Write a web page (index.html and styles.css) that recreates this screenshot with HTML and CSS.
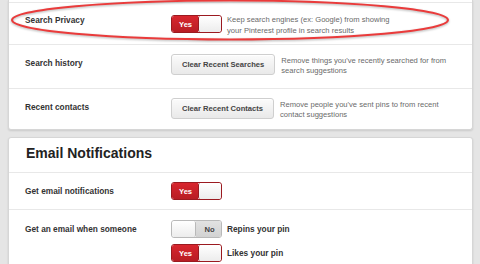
FILE: index.html
```html
<!doctype html>
<html lang="en">
  <head>
    <meta charset="utf-8">
    <meta name="viewport" content="width=device-width,initial-scale=1">
    <title>Account Settings</title>
    <link rel="stylesheet" href="styles.css">
  </head>

  <body>
    <main class="settings">
      <section class="card">
        <div class="row">
          <div class="label">Search Privacy</div>
          <div class="toggle on"><span class="face">Yes</span><span class="knob"></span></div>
          <p class="desc">Keep search engines (ex: Google) from showing<br>your Pinterest profile in search results</p>
        </div>

        <div class="row action">
          <div class="label">Search history</div>
          <button class="btn">Clear Recent Searches</button>
          <p class="desc">Remove things you've recently searched for from<br>search suggestions</p>
        </div>

        <div class="row action last">
          <div class="label">Recent contacts</div>
          <button class="btn">Clear Recent Contacts</button>
          <p class="desc">Remove people you've sent pins to from recent<br>contact suggestions</p>
        </div>
      </section>

      <section class="card">
        <h2>Email Notifications</h2>

        <div class="row single">
          <div class="label">Get email notifications</div>
          <div class="toggle on"><span class="face">Yes</span><span class="knob"></span></div>
        </div>

        <div class="row single multi">
          <div class="label">Get an email when someone</div>
          <ul class="options">
            <li>
              <div class="toggle off"><span class="knob"></span><span class="face">No</span></div>
              <span>Repins your pin</span>
            </li>
            <li>
              <div class="toggle on"><span class="face">Yes</span><span class="knob"></span></div>
              <span>Likes your pin</span>
            </li>
          </ul>
        </div>
      </section>

      <!-- hand-drawn highlight round the privacy row -->
      <svg class="mark" width="480" height="48" viewBox="0 0 480 48">
        <ellipse cx="230" cy="20" rx="218" ry="19.5" fill="none" stroke="#ea3b3b" stroke-width="2"></ellipse>
      </svg>
    </main>
  </body>
</html>
```

FILE: styles.css
```css
body {
  margin: 0;
  background: #e5e5e5;
  color: #333;
  font-family: "Liberation Sans", Arial, sans-serif;
  -webkit-font-smoothing: antialiased;
}

.settings {
  position: relative;
  padding: 0 7px 0 8px;
}

.card {
  background: #fff;
  border: 1px solid #d6d6d6;
  border-top: 0;
  border-radius: 0 0 3px 3px;
  box-shadow: 0 1px 2px rgba(0, 0, 0, 0.12);
  padding-top: 2px;
  margin-bottom: 7px;
}

.card + .card {
  border-top: 1px solid #d6d6d6;
  border-radius: 3px;
  padding-top: 0;
}

.card h2 {
  margin: 0;
  padding: 7px 0 11px 17px;
  font-size: 14px;
  line-height: 16px;
  color: #222;
}

.row {
  display: flex;
  align-items: flex-start;
  border-top: 1px solid #e8e8e8;
  padding: 12px 0 8px 16px;
}

.label {
  width: 146px;
  flex: none;
  font-size: 8.3px;
  font-weight: bold;
  line-height: 10px;
  color: #333;
}

.desc {
  margin: 0 0 0 5px;
  font-size: 7.6px;
  line-height: 10.5px;
  color: #6a6a6a;
}

.row.action {
  padding: 9px 0 12px 16px;
}

.row.action.last {
  padding-bottom: 9px;
}

.action .label {
  margin-top: 4px;
}

.action .desc {
  margin: 2px 0 0 6px;
  line-height: 10px;
}

.row.single {
  padding: 9px 0 9px 16px;
}

.single .label {
  margin-top: 4px;
}

.row.multi {
  padding: 10px 0 6px 16px;
}

.btn {
  height: 21px;
  padding: 0 10px;
  border: 1px solid #cfcfcf;
  border-radius: 3px;
  background: linear-gradient(#fbfbfb, #e9e9e9);
  box-shadow: inset 0 1px 0 #fff;
  font-family: inherit;
  font-size: 7.6px;
  font-weight: bold;
  color: #444;
  flex: none;
}

.toggle {
  display: flex;
  width: 51px;
  height: 18px;
  box-sizing: border-box;
  border: 1px solid #9b1a20;
  border-radius: 3px;
  overflow: hidden;
  flex: none;
}

.toggle .face {
  display: flex;
  align-items: center;
  font-size: 7.6px;
  font-weight: bold;
}

.toggle.on .face {
  width: 26px;
  padding-left: 7px;
  box-sizing: border-box;
  background: linear-gradient(#d8262e, #b81d24);
  color: #fff;
}

.toggle .knob {
  flex: 1;
  background: linear-gradient(#fff, #ececec);
}

.toggle.on .knob {
  border-left: 1px solid #9b1a20;
  border-radius: 2px;
}

.toggle.off {
  border-color: #b9b9b9;
}

.toggle.off .knob {
  flex: none;
  width: 23px;
  border-right: 1px solid #b9b9b9;
  border-radius: 2px;
}

.toggle.off .face {
  flex: 1;
  justify-content: center;
  padding-left: 2px;
  background: linear-gradient(#e2e2e2, #d2d2d2);
  color: #444;
}

.options {
  list-style: none;
  margin: 0;
  padding: 0;
}

.options li {
  display: flex;
  align-items: center;
  gap: 5px;
  margin-bottom: 6px;
  font-size: 8.3px;
  font-weight: bold;
  color: #333;
}

.mark {
  position: absolute;
  top: 0;
  left: 0;
  filter: drop-shadow(0 1px 1px rgba(0, 0, 0, 0.3));
}
```
